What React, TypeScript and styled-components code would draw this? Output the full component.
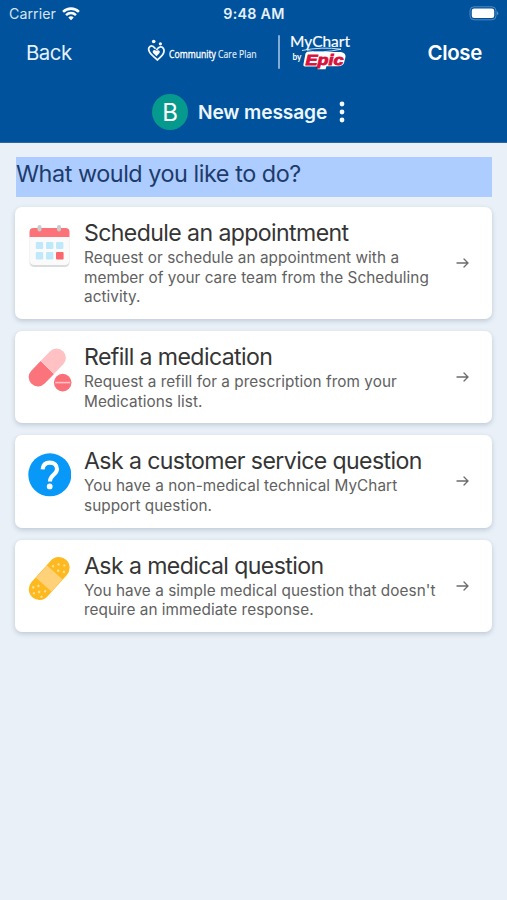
import React from "react";
import styled, { createGlobalStyle } from "styled-components";

const GlobalStyle = createGlobalStyle`
  * { box-sizing: border-box; }
  body { margin: 0; background: #e9f0f8; font-family: Inter, "Liberation Sans", sans-serif; }
  button { font: inherit; border: 0; padding: 0; background: none; color: inherit; text-align: left; cursor: pointer; }
  svg { display: block; flex: none; }
`;

const Screen = styled.div`
  width: 507px;
  height: 900px;
  overflow: hidden;
  background: #e9f0f8;
`;

const Header = styled.header`
  height: 143px;
  background: #00529c;
  border-bottom: 1px solid #30669c;
  color: #fff;
`;

const StatusBar = styled.div`
  display: grid;
  grid-template-columns: 1fr auto 1fr;
  align-items: center;
  height: 27px;
  padding: 0 8px 0 9px;
`;

const Carrier = styled.div`
  display: flex;
  align-items: center;
  gap: 6px;
  font-size: 14.2px;
  letter-spacing: 0.05px;
  color: #d5e4f3;
`;

const Clock = styled.div`
  font-size: 14.3px;
  font-weight: 600;
  letter-spacing: 0.25px;
  color: #e6f0f9;
`;

const BatterySlot = styled.div`
  justify-self: end;
`;

const NavBar = styled.nav`
  display: grid;
  grid-template-columns: 121px 214px 1fr;
  align-items: center;
  height: 52px;
  padding: 0 25px 0 26px;
`;

const NavButton = styled.button<{ $strong?: boolean }>`
  font-size: 20.4px;
  line-height: 26px;
  letter-spacing: ${(p) => (p.$strong ? "-0.3px" : "-0.5px")};
  font-weight: ${(p) => (p.$strong ? 580 : 400)};
  text-align: ${(p) => (p.$strong ? "right" : "left")};
  color: ${(p) => (p.$strong ? "#fff" : "#e4f1fb")};
`;

const TitleBar = styled.div`
  display: flex;
  align-items: center;
  height: 63px;
  padding: 3px 0 0 152px;
`;

const Avatar = styled.div`
  display: grid;
  place-items: center;
  width: 36px;
  height: 36px;
  margin-right: 10px;
  border-radius: 50%;
  background: #069a8e;
  font-size: 24px;
`;

const Title = styled.h1`
  margin: 0 12px 0 0;
  font-size: 19.2px;
  line-height: 26px;
  font-weight: 600;
  letter-spacing: -0.13px;
  color: #edf6fd;
`;

const Main = styled.main`
  padding: 14px 15px 0;
`;

const Prompt = styled.h2`
  height: 40px;
  margin: 0 0 10px 1px;
  background: #adccff;
  color: #1d3c6b;
  font-size: 23.4px;
  line-height: 33px;
  font-weight: 400;
  letter-spacing: -0.46px;
`;

const Choices = styled.div`
  display: flex;
  flex-direction: column;
  gap: 12px;
`;

const Card = styled.button<{ $height: number }>`
  display: grid;
  grid-template-columns: 69px 1fr 37px;
  width: 477px;
  height: ${(p) => p.$height}px;
  border-radius: 7px;
  background: #fff;
  box-shadow: 0 2px 5px rgba(60, 80, 100, 0.24);
`;

const IconSlot = styled.div`
  padding: 17px 0 0 12px;
`;

const Copy = styled.div`
  padding-top: 10px;
`;

const CardTitle = styled.div`
  height: 31px;
  color: #353535;
  font-size: 23.1px;
  line-height: 32px;
  letter-spacing: -0.6px;
  white-space: nowrap;
`;

const Description = styled.div`
  color: #616161;
  font-size: 15.3px;
  line-height: 19.6px;
  letter-spacing: 0.06px;
  white-space: pre;
`;

const ArrowSlot = styled.div`
  align-self: center;
`;

const Wifi = () => (
  <svg width="18" height="14" viewBox="0 0 19 15" fill="none" stroke="#fff" strokeWidth="2.7">
    <path d="M1 5.2C5.7.6 13.3.6 18 5.2" />
    <path d="M4.2 8.7C7.2 5.8 11.8 5.8 14.8 8.7" />
    <path d="M6.6 11.2C8.3 9.6 10.7 9.6 12.4 11.2L9.5 14.1Z" fill="#fff" stroke="none" />
  </svg>
);

const Battery = () => (
  <svg width="30" height="15" viewBox="0 0 30 15">
    <rect x="1" y=".8" width="26" height="13" rx="4" fill="none" stroke="#5289be" />
    <rect x="2.8" y="2.5" width="22.4" height="9.6" rx="2.3" fill="#fff" />
    <path d="M28.2 5.3q2 2 0 4z" fill="#709fca" />
  </svg>
);

const Brand = () => (
  <svg width="214" height="50" viewBox="147 28 214 50" fontFamily="Open Sans, sans-serif">
    <path d="M155 48.2C151.5 43.8 147.2 46.7 149.3 51.5C150.5 54.7 155.2 57.6 157.3 60C161.2 56.6 165.8 52.7 163.4 48.5C162.1 46.1 158.9 46.4 156.8 49.6" fill="none" stroke="#f0f8ff" strokeWidth="1.8" strokeLinecap="round" strokeLinejoin="round" />
    <circle cx="153.7" cy="41.5" r="1.8" fill="#fff" />
    <circle cx="160.4" cy="43.8" r="1.6" fill="#fff" />
    <path d="M156.5 56.3L152.9 52.8C151.9 50.6 154.7 49 156.3 51.1C157.8 49 160.9 50.7 159.5 53Z" fill="#fff" />
    <text x="169" y="57.8" fontSize="10.8" fill="#e4f0fc" stroke="#e4f0fc" strokeWidth=".15" textLength="87.5" lengthAdjust="spacingAndGlyphs">
      <tspan fill="#fff" stroke="#fff" strokeWidth=".35">Community</tspan> Care Plan
    </text>
    <path d="M279 35.3v33.5" stroke="#c7def5" strokeWidth="1.3" />
    <text x="290" y="47.3" fontFamily="Lato, sans-serif" fontSize="16" fill="#fff" stroke="#fff" strokeWidth=".2" textLength="60" lengthAdjust="spacingAndGlyphs">MyChart</text>
    <path d="M302 50.5Q322 46.5 341 49.2Q322 53.5 307 50.8" fill="none" stroke="#dceeff" strokeWidth=".9" />
    <text x="292.5" y="60.2" fontFamily="Lato, sans-serif" fontWeight="700" fontSize="8.7" fill="#fff" textLength="9" lengthAdjust="spacingAndGlyphs">by</text>
    <path d="M307 52H341Q346 53 345.500 57L344 63Q343 66 338 66.300H326.500L325.500 69.300H317.500L318 66.600H305Q303 66.500 303.400 64.500L305.500 53.500Q306 52 307 52Z" fill="#fff" />
    <text x="305.500" y="64.600" fontFamily="Liberation Sans, sans-serif" fontWeight="700" fontStyle="italic" fontSize="15.500" fill="#d8123d" stroke="#d8123d" strokeWidth=".9" textLength="38" lengthAdjust="spacingAndGlyphs">Epic</text>
  </svg>
);

const More = () => (
  <svg width="6" height="22" viewBox="0 0 6 22" fill="#f4faff">
    <circle cx="3" cy="3" r="2.4" />
    <circle cx="3" cy="11" r="2.4" />
    <circle cx="3" cy="19" r="2.4" />
  </svg>
);

const Calendar = () => (
  <svg width="44" height="44" viewBox="0 -1 44 44">
    <path d="M2.5 12h40v25q0 5-5 5h-30q-5 0-5-5z" fill="#d9dcdd" />
    <path d="M2.5 12h40v23q0 5-5 5h-30q-5 0-5-5z" fill="#fafafa" />
    <path d="M2.5 12V7q0-4 4-4h32q4 0 4 4v5z" fill="#fb7379" />
    <g fill="#c8cccd">
      <rect x="10.5" y="0" width="4" height="6.5" rx="2" />
      <rect x="30" y="0" width="4" height="6.5" rx="2" />
    </g>
    <g fill="#bfe9fa">
      <rect x="8.8" y="17" width="7.4" height="7" rx="1" />
      <rect x="19" y="17" width="7.4" height="7" rx="1" />
      <rect x="29" y="17" width="7.4" height="7" rx="1" />
      <rect x="8.8" y="27" width="7.4" height="7.5" rx="1" />
      <rect x="19" y="27" width="7.4" height="7.5" rx="1" />
    </g>
    <rect x="29" y="27" width="7.6" height="7.5" rx="1" fill="#fa666d" />
  </svg>
);

const Pills = () => (
  <svg width="46" height="45" viewBox="0 0 46 45">
    <g transform="rotate(-46 20.3 19.5)">
      <path d="M20.3 10.2H6.9a9.3 9.3 0 0 0 0 18.6h13.4z" fill="#fc747b" />
      <path d="M20.3 10.2h13.4a9.3 9.3 0 0 1 0 18.6H20.3z" fill="#ffc1c4" />
    </g>
    <circle cx="35.7" cy="34.6" r="8.8" fill="#fb7078" />
    <path d="M28.2 34.6h15" stroke="#ffc1c4" strokeWidth="1.6" />
  </svg>
);

const Question = () => (
  <svg width="44" height="46" viewBox="0 0 44 46" fill="none">
    <circle cx="22.8" cy="22.8" r="21.5" fill="#0798f8" />
    <path d="M15.6 17.4c.3-4.3 3-6.8 7.2-6.8s7.2 2.5 7.2 6.3c0 5.7-7.1 6-7.1 12.5" stroke="#fff" strokeWidth="4.1" />
    <circle cx="22.7" cy="34.4" r="2.9" fill="#fff" />
  </svg>
);

const Bandage = () => (
  <svg width="44" height="46" viewBox="0 0 44 46">
    <g transform="rotate(-48 22.2 21.5)">
      <rect x="-3" y="10.8" width="50.4" height="21.4" rx="10.7" fill="#fdb91f" />
      <rect x="14" y="11.2" width="16.4" height="20.6" fill="#ffd27a" />
      <g fill="#ffdf8a">
        <circle cx="1" cy="20" r="1.2" />
        <circle cx="5" cy="15.5" r="1.3" />
        <circle cx="9.5" cy="18.5" r="1.3" />
        <circle cx="5.5" cy="23" r="1.3" />
        <circle cx="10" cy="27" r="1.3" />
        <circle cx="3.5" cy="28" r="1.2" />
        <circle cx="34" cy="16" r="1.3" />
        <circle cx="39" cy="19" r="1.3" />
        <circle cx="34" cy="23" r="1.3" />
        <circle cx="42" cy="24" r="1.2" />
        <circle cx="37" cy="28" r="1.3" />
      </g>
    </g>
  </svg>
);

const Arrow = () => (
  <svg width="15" height="12" viewBox="0 0 15 12" fill="none" stroke="#6c6c6c" strokeWidth="1.3" strokeLinecap="round">
    <path d="M2 6h11M9 2l4 4-4 4" />
  </svg>
);

const choices = [
  { title: "Schedule an appointment", text: "Request or schedule an appointment with a\nmember of your care team from the Scheduling\nactivity.", icon: <Calendar />, height: 112 },
  { title: "Refill a medication", text: "Request a refill for a prescription from your\nMedications list.", icon: <Pills />, height: 92 },
  { title: "Ask a customer service question", text: "You have a non-medical technical MyChart\nsupport question.", icon: <Question />, height: 92.5 },
  { title: "Ask a medical question", text: "You have a simple medical question that doesn't\nrequire an immediate response.", icon: <Bandage />, height: 92 },
];

export default function App() {
  return (
    <Screen>
      <GlobalStyle />
      <Header>
        <StatusBar>
          <Carrier>Carrier <Wifi /></Carrier>
          <Clock>9:48 AM</Clock>
          <BatterySlot><Battery /></BatterySlot>
        </StatusBar>
        <NavBar>
          <NavButton>Back</NavButton>
          <Brand />
          <NavButton $strong>Close</NavButton>
        </NavBar>
        <TitleBar>
          <Avatar>B</Avatar>
          <Title>New message</Title>
          <More />
        </TitleBar>
      </Header>
      <Main>
        <Prompt>What would you like to do?</Prompt>
        <Choices>
          {choices.map((c) => (
            <Card key={c.title} $height={c.height}>
              <IconSlot>{c.icon}</IconSlot>
              <Copy>
                <CardTitle>{c.title}</CardTitle>
                <Description>{c.text}</Description>
              </Copy>
              <ArrowSlot><Arrow /></ArrowSlot>
            </Card>
          ))}
        </Choices>
      </Main>
    </Screen>
  );
}
